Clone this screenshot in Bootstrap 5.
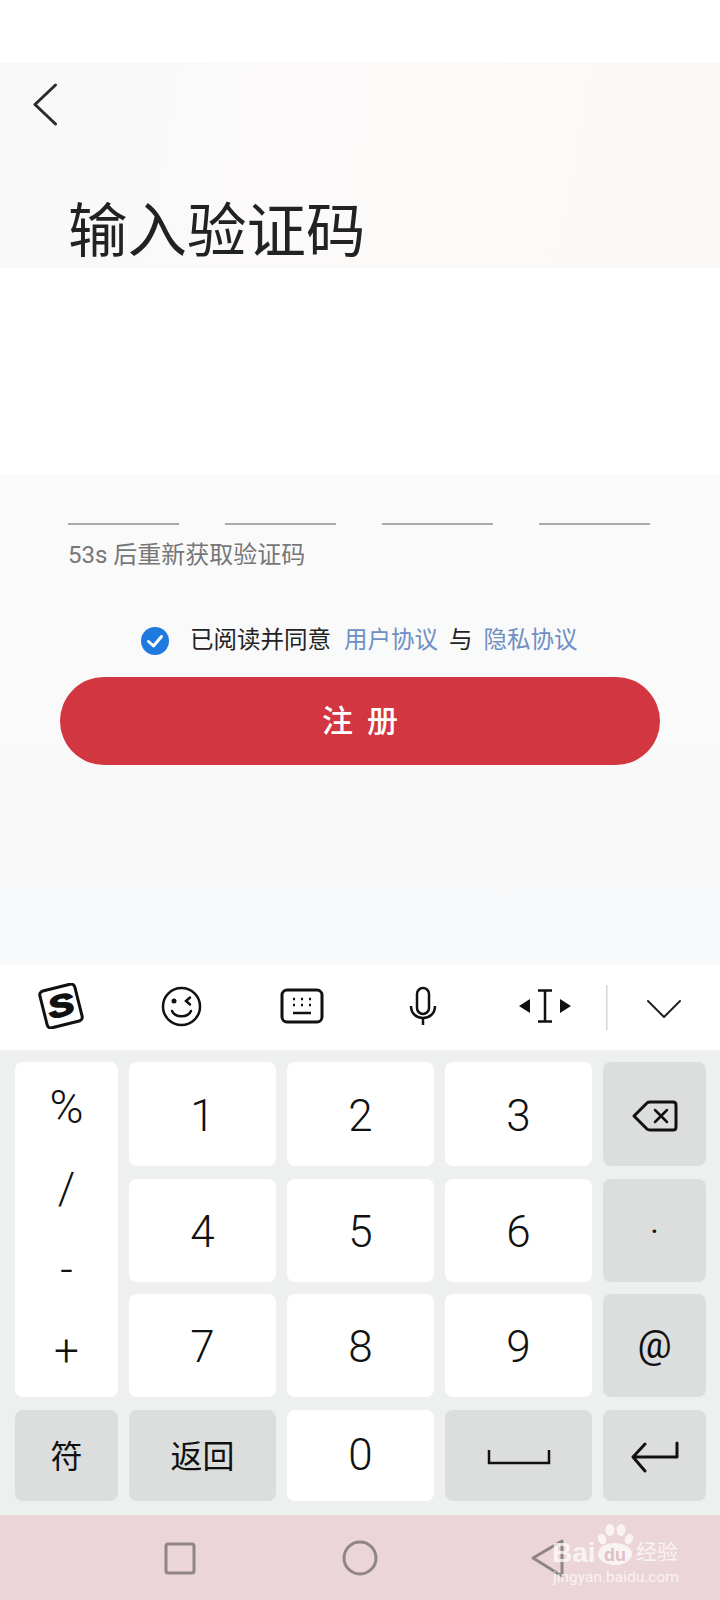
<!DOCTYPE html>
<html lang="zh-CN">
<head>
    <meta charset="UTF-8">
    <meta name="viewport" content="width=device-width, initial-scale=1.0">
    <title>输入验证码</title>
    <link href="https://cdn.jsdelivr.net/npm/bootstrap@5.3.2/dist/css/bootstrap.min.css" rel="stylesheet">
    <style>
        body { width: 720px; height: 1600px; overflow: hidden; background: #fff; font-family: Roboto, "Noto Sans CJK SC", sans-serif; }
        .top-gap { height: 63px; background: #fff; }
        .head-band { height: 205px; background: linear-gradient(100deg, #f9f9f9, #fcf9f9 50%, #fbf8f8); padding: 20px 0 0 33px; overflow: hidden; }
        .title-text { font-size: 59.500px; line-height: 70px; font-weight: 400; color: #222; margin: 71px 0 0 35px; }
        .white-gap { height: 206px; background: #fff; }
        .form-band { height: 491px; background: linear-gradient(#fafafa, #f8f9fa); padding: 49px 60px 0; }
        .code-row { padding: 0 10px 0 8px; gap: 46px; }
        .code-line { flex: 1; height: 2px; background: #aaa; }
        .resend { font-size: 24px; line-height: 30px; color: #777; margin: 15px 0 0 8px; }
        .agree { margin-top: 53px; padding-left: 81px; height: 36px; font-size: 23.5px; color: #222; }
        .agree a { color: #6f8ec4; text-decoration: none; }
        .agree svg { margin-right: 21px; }
        .agree-first { margin-left: 13px; }
        .agree-sep { margin: 0 11px; }
        .red-pill { width: 600px; height: 88px; border: 0; border-radius: 44px; background: #d23640; color: #fff; font-size: 31px; font-weight: 500; letter-spacing: 14px; padding: 3px 0 0 14px; margin-top: 18px; }
        .tool-bar { height: 85px; background: #fff; position: relative; }
        .tool-bar svg { position: absolute; }
        .key-pad { height: 465px; background: #eef0ef; padding: 12px 15px 0; display: grid; grid-template-columns: 103px 147px 147px 147px 103px; grid-template-rows: 104px 103px 103px 91px; column-gap: 11px; row-gap: 12.5px; }
        .pad-key { border-radius: 8px; background: #fff; color: #111; font-size: 44px; font-weight: 300; padding-top: 3px; }
        .pad-key.fn { background: #dcdedd; }
        .pad-key.cn { font-size: 32px; font-weight: 400; }
        .pad-key.at-key { font-size: 38px; font-weight: 400; padding-top: 0; }
        .pad-key.zero-key { padding-top: 0; }
        .sym-key { grid-row: span 3; display: grid; grid-template-rows: repeat(4, 81px); padding-top: 5px; }
        .sym-pct { font-size: 46px; }
        .nav-strip { height: 85px; background: #ecd5d9; position: relative; }
        .nav-strip > svg { position: absolute; top: 0; left: 0; }
        .wm-group { opacity: .72; }
        .wm-bai { font-family: "Liberation Sans", sans-serif; font-size: 28px; font-weight: 700; fill: #fff; }
        .wm-du { font-family: "Liberation Sans", sans-serif; font-size: 18px; font-weight: 700; fill: #d9b8be; }
        .wm-cn { font-family: "Noto Sans CJK SC", sans-serif; font-size: 21px; fill: #fff; }
        .wm-url { font-family: Roboto, sans-serif; font-size: 15.5px; fill: #fff; }
    </style>
</head>
<body>
<div class="top-gap"></div>

<div class="head-band">
    <svg width="25" height="43" viewBox="0 0 25 43" class="d-block" fill="none" stroke="#2b2b2b" stroke-width="3" stroke-linecap="round" stroke-linejoin="round">
        <path d="M22.500 2 L2 21.500 L22.500 41"/>
    </svg>
    <h1 class="title-text">输入验证码</h1>
</div>

<div class="white-gap"></div>

<div class="form-band">
    <div class="code-row d-flex">
        <div class="code-line"></div>
        <div class="code-line"></div>
        <div class="code-line"></div>
        <div class="code-line"></div>
    </div>
    <p class="resend mb-0">53s 后重新获取验证码</p>
    <div class="agree d-flex align-items-center">
        <svg width="28" height="28" viewBox="0 0 28 28">
            <circle cx="14" cy="14" r="14" fill="#1f7ae0"/>
            <path d="M7.500 14.500 L12.500 19 L20.500 9.500" fill="none" stroke="#fff" stroke-width="3" stroke-linecap="round" stroke-linejoin="round"/>
        </svg>
        <span>已阅读并同意</span>
        <a href="#" class="agree-first">用户协议</a>
        <span class="agree-sep">与</span>
        <a href="#">隐私协议</a>
    </div>
    <button type="button" class="red-pill d-block">注册</button>
</div>

<div class="tool-bar">
    <svg style="left:37px;top:18px" width="48" height="46" viewBox="0 0 48 46">
        <g transform="rotate(-14 24 23)">
            <rect x="6" y="4" width="36" height="38" rx="4" fill="#fff" stroke="#111" stroke-width="3"/>
            <text transform="translate(24 33) scale(1.3 1)" text-anchor="middle" font-family="Liberation Sans" font-weight="700" font-style="italic" font-size="30" fill="#111" stroke="#111" stroke-width="1.800">S</text>
        </g>
    </svg>
    <svg style="left:161px;top:21px" width="41" height="41" viewBox="0 0 41 41" fill="none" stroke="#111" stroke-width="2.500" stroke-linecap="round">
        <circle cx="20.500" cy="20.500" r="18.500"/>
        <circle cx="13" cy="15" r="2.500" fill="#111" stroke="none"/>
        <path d="M29 11.500 L25 15 L29 18.500"/>
        <path d="M11 25 C14 32 27 32 30 25"/>
    </svg>
    <svg style="left:280px;top:23px" width="44" height="36" viewBox="0 0 44 36" fill="none" stroke="#111" stroke-width="3">
        <rect x="2" y="2" width="40" height="32" rx="5"/>
        <path d="M13 25 H31" stroke-width="2.500"/>
        <path d="M13 11 h2 M21 11 h2 M29 11 h2 M13 17 h2 M21 17 h2 M29 17 h2" stroke-width="2.500"/>
    </svg>
    <svg style="left:409px;top:21px" width="28" height="40" viewBox="0 0 28 40" fill="none" stroke="#111" stroke-width="2.500">
        <rect x="8" y="2" width="12" height="26" rx="6"/>
        <path d="M2 20 C2 36 26 36 26 20"/>
        <path d="M14 32 V39"/>
    </svg>
    <svg style="left:519px;top:24px" width="52" height="34" viewBox="0 0 52 34">
        <path d="M0 17 L11 10 V24 Z M52 17 L41 10 V24 Z" fill="#111"/>
        <path d="M19 1.500 H33 M19 32.500 H33 M26 1.500 V32.500" stroke="#111" stroke-width="2.500" fill="none"/>
    </svg>
    <svg style="left:606px;top:20px" width="2" height="45" viewBox="0 0 2 45">
        <rect width="1.500" height="45" fill="#d5d7d6"/>
    </svg>
    <svg style="left:646px;top:34px" width="36" height="20" viewBox="0 0 36 20" fill="none" stroke="#222" stroke-width="2" stroke-linecap="round" stroke-linejoin="round">
        <path d="M2 2 L18 18 L34 2"/>
    </svg>
</div>

<div class="key-pad">
    <div class="pad-key sym-key text-center">
        <div class="sym-pct d-flex align-items-center justify-content-center">%</div>
        <div class="d-flex align-items-center justify-content-center">/</div>
        <div class="d-flex align-items-center justify-content-center">-</div>
        <div class="d-flex align-items-center justify-content-center">+</div>
    </div>
    <div class="pad-key d-flex align-items-center justify-content-center">1</div>
    <div class="pad-key d-flex align-items-center justify-content-center">2</div>
    <div class="pad-key d-flex align-items-center justify-content-center">3</div>
    <div class="pad-key fn d-flex align-items-center justify-content-center">
        <svg width="46" height="32" viewBox="0 0 46 32" fill="none" stroke="#111" stroke-width="3" stroke-linejoin="round" stroke-linecap="round">
            <path d="M2 16 L15 3 Q16 2 18 2 H41 Q44 2 44 5 V27 Q44 30 41 30 H18 Q16 30 15 29 Z"/>
            <path d="M23 10 L35 22 M35 10 L23 22" stroke-width="2.500"/>
        </svg>
    </div>
    <div class="pad-key d-flex align-items-center justify-content-center">4</div>
    <div class="pad-key d-flex align-items-center justify-content-center">5</div>
    <div class="pad-key d-flex align-items-center justify-content-center">6</div>
    <div class="pad-key fn cn d-flex align-items-center justify-content-center">·</div>
    <div class="pad-key d-flex align-items-center justify-content-center">7</div>
    <div class="pad-key d-flex align-items-center justify-content-center">8</div>
    <div class="pad-key d-flex align-items-center justify-content-center">9</div>
    <div class="pad-key fn at-key d-flex align-items-center justify-content-center">@</div>
    <div class="pad-key fn cn d-flex align-items-center justify-content-center">符</div>
    <div class="pad-key fn cn d-flex align-items-center justify-content-center">返回</div>
    <div class="pad-key zero-key d-flex align-items-center justify-content-center">0</div>
    <div class="pad-key fn d-flex align-items-center justify-content-center">
        <svg width="64" height="16" viewBox="0 0 64 16" fill="none" stroke="#111" stroke-width="2.500">
            <path d="M2 1 V14 H62 V1"/>
        </svg>
    </div>
    <div class="pad-key fn d-flex align-items-center justify-content-center">
        <svg width="48" height="32" viewBox="0 0 48 32" fill="none" stroke="#111" stroke-width="3" stroke-linecap="round" stroke-linejoin="round">
            <path d="M46 2 V16 H2 M14 3 L2 16 L14 30"/>
        </svg>
    </div>
</div>

<div class="nav-strip">
    <svg width="720" height="85" viewBox="0 0 720 85">
        <g fill="none" stroke="#8f8587" stroke-width="3" stroke-linejoin="round">
            <rect x="166" y="29" width="28" height="29" rx="2"/>
            <circle cx="360" cy="43" r="16"/>
            <path d="M562 26 L533 43 L562 61 Z"/>
        </g>
        <g class="wm-group">
            <text class="wm-bai" x="552" y="47">Bai</text>
            <g fill="#fff">
                <ellipse cx="602" cy="24" rx="4" ry="5.500" transform="rotate(-25 602 24)"/>
                <ellipse cx="610" cy="15" rx="4.500" ry="6"/>
                <ellipse cx="621" cy="15" rx="4.500" ry="6"/>
                <ellipse cx="629" cy="24" rx="4" ry="5.500" transform="rotate(25 629 24)"/>
                <ellipse cx="615" cy="39" rx="17" ry="11"/>
            </g>
            <text class="wm-du" x="615" y="46" text-anchor="middle">du</text>
            <text class="wm-cn" x="636" y="44">经验</text>
            <text class="wm-url" x="553" y="67">jingyan.baidu.com</text>
        </g>
    </svg>
</div>

<script src="https://cdn.jsdelivr.net/npm/bootstrap@5.3.2/dist/js/bootstrap.bundle.min.js"></script>
</body>
</html>
